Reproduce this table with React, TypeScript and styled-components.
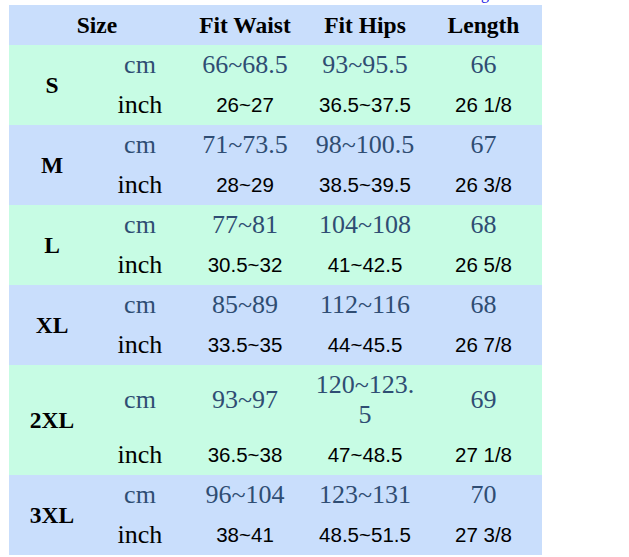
import React from "react";
import styled, { createGlobalStyle } from "styled-components";

const GlobalStyle = createGlobalStyle`
  html, body { margin: 0; padding: 0; background: #ffffff; }
  body { font-family: "Liberation Serif", "Times New Roman", serif; }
`;

const Page = styled.div`
  padding: 0 0 0 9px;
  display: flex;
  flex-direction: column;
`;

const TopNote = styled.div`
  height: 5px;
  width: 533px;
  overflow: hidden;
  display: flex;
  justify-content: flex-end;
  align-items: flex-end;
  padding-right: 53px;
  box-sizing: border-box;
`;

const NoteText = styled.span`
  font-family: "Liberation Serif", serif;
  font-size: 16px;
  line-height: 23px;
  color: #1a1ae6;
`;

const Table = styled.table`
  width: 533px;
  border-collapse: collapse;
  border-spacing: 0;
  table-layout: fixed;
`;

const HeadRow = styled.tr`
  background: #c9defc;
  height: 40px;
`;

const HeadCell = styled.th`
  padding: 0;
  font-family: "Liberation Serif", serif;
  font-weight: bold;
  font-size: 23.5px;
  color: #000;
  text-align: center;
  vertical-align: middle;
`;

const BodyRow = styled.tr<{ $tone: "green" | "blue" }>`
  background: ${(p) => (p.$tone === "green" ? "#c7fce4" : "#c9defc")};
`;

const SizeCell = styled.td`
  padding: 0;
  font-family: "Liberation Serif", serif;
  font-weight: bold;
  font-size: 23.5px;
  color: #000;
  text-align: center;
  vertical-align: middle;
`;

const UnitCell = styled.td<{ $unit: "cm" | "inch" }>`
  padding: 5px 0;
  height: 30px;
  font-family: "Liberation Serif", serif;
  font-size: 26px;
  line-height: 30px;
  color: ${(p) => (p.$unit === "cm" ? "#2f4d73" : "#000")};
  text-align: center;
  vertical-align: middle;
`;

const ValueCell = styled.td<{ $unit: "cm" | "inch" }>`
  padding: 5px 7px;
  height: 30px;
  overflow-wrap: anywhere;
  font-family: ${(p) =>
    p.$unit === "cm" ? `"Liberation Serif", serif` : `"Liberation Sans", Arial, sans-serif`};
  font-size: ${(p) => (p.$unit === "cm" ? "26px" : "20.5px")};
  line-height: 30px;
  color: ${(p) => (p.$unit === "cm" ? "#2f4d73" : "#000")};
  text-align: center;
  vertical-align: middle;
`;

type Row = {
  size: string;
  cm: [string, string, string];
  inch: [string, string, string];
};

const rows: Row[] = [
  { size: "S", cm: ["66~68.5", "93~95.5", "66"], inch: ["26~27", "36.5~37.5", "26 1/8"] },
  { size: "M", cm: ["71~73.5", "98~100.5", "67"], inch: ["28~29", "38.5~39.5", "26 3/8"] },
  { size: "L", cm: ["77~81", "104~108", "68"], inch: ["30.5~32", "41~42.5", "26 5/8"] },
  { size: "XL", cm: ["85~89", "112~116", "68"], inch: ["33.5~35", "44~45.5", "26 7/8"] },
  { size: "2XL", cm: ["93~97", "120~123.5", "69"], inch: ["36.5~38", "47~48.5", "27 1/8"] },
  { size: "3XL", cm: ["96~104", "123~131", "70"], inch: ["38~41", "48.5~51.5", "27 3/8"] },
];

export default function App() {
  return (
    <>
      <GlobalStyle />
      <Page>
        <TopNote>
          <NoteText>Sizing</NoteText>
        </TopNote>
        <Table>
          <colgroup>
            <col style={{ width: 86 }} />
            <col style={{ width: 90 }} />
            <col style={{ width: 120 }} />
            <col style={{ width: 120 }} />
            <col style={{ width: 117 }} />
          </colgroup>
          <thead>
            <HeadRow>
              <HeadCell colSpan={2}>Size</HeadCell>
              <HeadCell>Fit Waist</HeadCell>
              <HeadCell>Fit Hips</HeadCell>
              <HeadCell>Length</HeadCell>
            </HeadRow>
          </thead>
          <tbody>
            {rows.map((r, i) => {
              const tone = i % 2 === 0 ? "green" : "blue";
              return (
                <React.Fragment key={r.size}>
                  <BodyRow $tone={tone}>
                    <SizeCell rowSpan={2}>{r.size}</SizeCell>
                    <UnitCell $unit="cm">cm</UnitCell>
                    {r.cm.map((v, j) => (
                      <ValueCell key={j} $unit="cm">
                        {v}
                      </ValueCell>
                    ))}
                  </BodyRow>
                  <BodyRow $tone={tone}>
                    <UnitCell $unit="inch">inch</UnitCell>
                    {r.inch.map((v, j) => (
                      <ValueCell key={j} $unit="inch">
                        {v}
                      </ValueCell>
                    ))}
                  </BodyRow>
                </React.Fragment>
              );
            })}
          </tbody>
        </Table>
      </Page>
    </>
  );
}
